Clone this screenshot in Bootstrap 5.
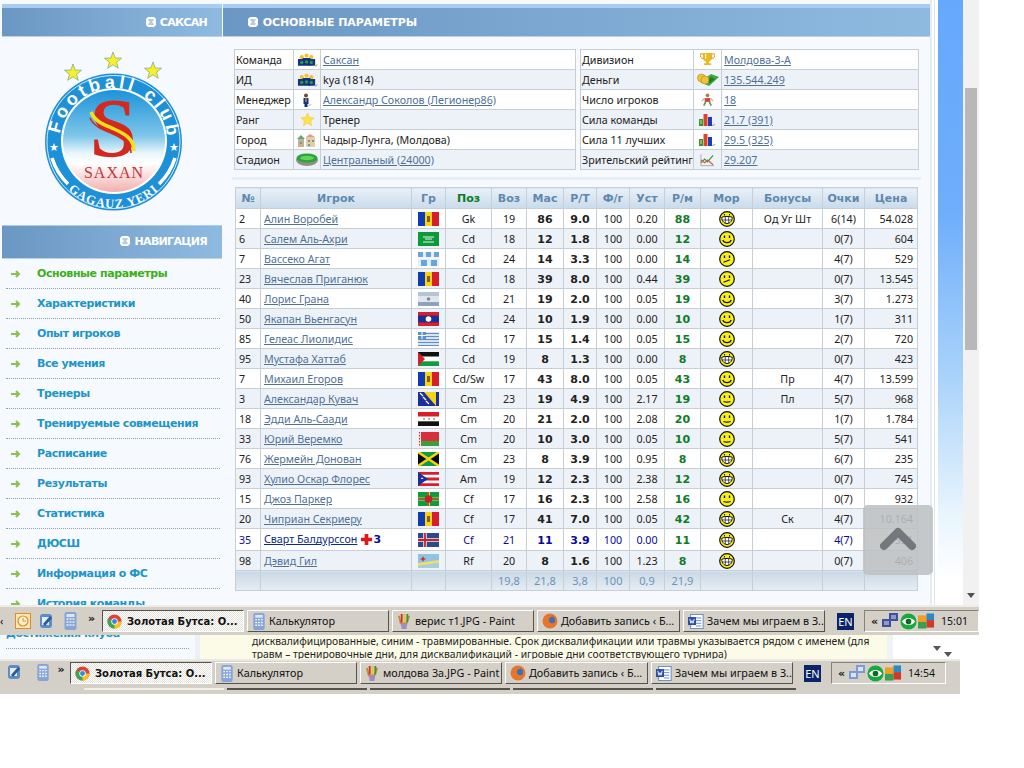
<!DOCTYPE html>
<html lang="ru">
<head>
<meta charset="utf-8">
<title>Золотая Бутса</title>
<link href="https://cdn.jsdelivr.net/npm/bootstrap@5.3.0/dist/css/bootstrap.min.css" rel="stylesheet">
<style>
html,body{margin:0;background:#fff;}
body{width:1024px;height:768px;overflow:hidden;font-family:"Noto Sans","DejaVu Sans",sans-serif;font-size:10.7px;color:#222;line-height:14px;}
a{color:#4f7197;}
.shot{width:979px;}
.win{height:605px;overflow:hidden;width:979px;}
.pagearea{width:930px;background:#f6f9fd;}
.side{width:220px;margin-left:2px;flex:none;}
.main{width:707px;margin-left:1px;flex:none;}
.hdr{height:33px;margin-top:4px;border-top:4px solid #a8cdf1;background:linear-gradient(90deg,#6a97c3,#8fbae0);color:#fff;font:bold 11px/29px "DejaVu Sans",sans-serif;letter-spacing:-.1px;border-bottom:1px solid #b9d2ea;}
.hdr2{margin-top:0;border-top:1px solid #a8cdf1;height:34px;line-height:31px;}
.hdr svg{vertical-align:-1px;margin-right:1px;}
.hright{text-align:right;padding-right:15px;letter-spacing:-.7px;}
.hleft{padding-left:25px;}
.logobox{height:188px;}
.navlist{list-style:none;margin:0;padding:0;}
.navlist li{height:30px;margin:0 0 0 4px;border-bottom:1px dotted #8ca0b3;padding-left:5px;display:flex;align-items:center;width:214px;font:bold 11px "DejaVu Sans",sans-serif;color:#1c95c9;letter-spacing:-.42px;}
.navlist li svg{margin-right:16px;flex:none;}
.navlist li.on{color:#3cb017;}
.tbl-p{border-collapse:collapse;table-layout:fixed;margin:0;}
.tbl-p td{border:1px solid #c6ced6;height:20px;padding:0 2px;line-height:14px;white-space:nowrap;background:#fff;color:#222;vertical-align:middle;}
.tbl-p td:first-child{padding-left:1px;}
.tbl-p tr:nth-child(even) td{background:#edf2f9;}
.tbl-p td.ic{text-align:center;padding:0;}
.tbl-p td svg{display:block;margin:auto;}
.plist{margin-top:12px;margin-left:11px;gap:4px;}
.sep{height:3px;background:#e7eef5;margin:7px 9px 7px 9px;}
.tbl-r{border-collapse:collapse;table-layout:fixed;margin:0 0 0 12px;width:682px;}
.tbl-r th,.tbl-r td{border:1px solid #c6ced6;height:20px;padding:0 3px;line-height:14px;white-space:nowrap;text-align:center;vertical-align:middle;background:#fff;color:#222;}
.tbl-r th{height:21px;background:linear-gradient(#e9f0f7,#c9dbeb);color:#5f88ae;font:bold 11px "DejaVu Sans",sans-serif;}
.tbl-r th.gp{color:#0b7a24;}
.tbl-r tbody tr:nth-child(even) td{background:#edf2f9;}
.tbl-r td.l{text-align:left;}
.tbl-r td.r{text-align:right;padding-right:4px;}
.tbl-r td.nm{padding-left:3px;}
.tbl-r td b{font:bold 11px "DejaVu Sans",sans-serif;}
.tbl-r td.g b{color:#0f7a2a;}
.tbl-r td svg{display:block;margin:auto;}
.tbl-r tr.inj td{color:#0a0a9c;height:22px;}
.tbl-r tr.inj a{color:#0a2a8c;}
.tbl-r tr.inj td.g b{color:#0f7a2a;}
.tbl-r tr.inj td svg.crossm{display:inline;margin:0 1px 2px 4px;vertical-align:middle;}
.injn{color:#0a0a9c;}
.tbl-r tfoot td{background:linear-gradient(#c9d8e5,#e6edf4);color:#6f93b6;font-size:11px;}
.tgap{width:8px;flex:none;background:linear-gradient(90deg,#e6ecf2 0,#e6ecf2 2px,#fff 2px,#fff 4px,#dde4ea 4px,#dde4ea 5px,#fff 5px);}
.bluecol{width:25px;background:linear-gradient(#66a8fb 0,#6eaefb 35%,#a9d2fa 62%,#e8f5fd 85%,#fff 96%);flex:none;}
.sbar{width:16px;flex:none;background:#f1f1f1;position:relative;}
.sthumb{position:absolute;left:2px;right:2px;top:88px;height:262px;background:#b8b8b8;}
.sarrow{position:absolute;left:4px;top:593px;width:0;height:0;border-left:4px solid transparent;border-right:4px solid transparent;border-top:5px solid #505050;}
.totop{position:absolute;left:863px;top:505px;width:70px;height:70px;border-radius:5px;background:rgba(190,192,195,.88);}
.totop svg{display:block;margin:20px auto 0;}
.tbar{background:#d4d0c8;border-top:2px solid #efece6;height:30px;display:flex;align-items:center;font-size:10.8px;color:#111;white-space:nowrap;}
.tbar1{width:979px;}
.tbar2{width:960px;height:29px;border-top:2px solid #ece9e2;align-items:flex-start;padding-top:1px;}
.tbtn{height:22px;flex:none;border:1px solid;border-color:#fff #55534e #55534e #fff;display:flex;align-items:center;padding-left:4px;gap:3px;overflow:hidden;}
.tbtn svg{flex:none;}
.tbtn.act{background:repeating-conic-gradient(#fff 0 25%,#e4e1da 0 50%) 0 0/2px 2px;border-color:#55534e #fff #fff #55534e;font:bold 10px "DejaVu Sans",sans-serif;gap:5px;}
.w141{width:142px;margin-right:3px;}
.w143{width:143px;margin-right:3px;}
.tico{flex:none;margin-right:8px;}
.chev{font:bold 11px "DejaVu Sans",sans-serif;margin:-6px 0 0 0;width:21px;flex:none;text-align:center;}
.lang{flex:none;width:17px;height:17px;background:#0a246a;color:#fff;text-align:center;font-size:11px;line-height:17px;margin:0 10px 0 11px;}
.tray{flex:none;width:115px;height:22px;border:1px solid;border-color:#85827a #fff #fff #85827a;display:flex;align-items:center;padding-left:6px;gap:1px;}
.tray b{font:bold 11px "DejaVu Sans",sans-serif;margin-right:2px;}
.tray span.tm{margin-left:5px;font-size:10.5px;}
.stub{height:24px;display:flex;width:960px;overflow:hidden;background:#fff;}
.stubside{width:195px;flex:none;background:#f6f9fd;overflow:hidden;}
.stubside div{font:bold 11px "DejaVu Sans",sans-serif;color:#1c95c9;margin:-8px 0 0 6px;height:22px;width:183px;border-bottom:1px dotted #8ca0b3;letter-spacing:-.42px;white-space:nowrap;}
.stubgap{width:5px;flex:none;background:#ecf1f6;}
.stubnote{width:687px;flex:none;background:#fbfbe7;padding:0 0 0 52px;overflow:hidden;font-size:10.3px;line-height:13px;color:#222;}
.stubnote p{margin:0;white-space:nowrap;}
.stubrt{flex:1;background:#fff;position:relative;border-left:6px solid #f0f3f6;}
.tri{position:absolute;width:0;height:0;border-left:4px solid transparent;border-right:4px solid transparent;border-top:5px solid #555;}
.residue{width:960px;height:6px;background:#d4d0c8;display:flex;gap:3px;padding-left:84px;}
.residue i{display:block;width:140px;height:2px;background:#55534e;margin-top:0;}
.residue i.w{background:#f2f0ec;}
</style>
</head>
<body>
<svg width="0" height="0" class="position-absolute">
<defs>
<symbol id="hi" viewBox="0 0 10 10"><path d="M2 0h6l2 2v6l-2 2H2L0 8V2z" fill="#fff"/><path d="M2.500 3h5M2.500 7h5M3.500 5h3" stroke="#6a97c3" stroke-width="1.200"/></symbol>
<symbol id="arr" viewBox="0 0 10 8"><path d="M0 4h8M5 1l3 3-3 3" fill="none" stroke="#8cc152" stroke-width="2"/></symbol>
<symbol id="team" viewBox="0 0 22 14"><circle cx="5" cy="4" r="2.200" fill="#f2c230"/><circle cx="10" cy="2.500" r="2.200" fill="#f2c230"/><circle cx="15" cy="4" r="2.200" fill="#f2c230"/><path d="M1 13V6h7v7zM6 13V5h8v8z" fill="#16317e"/><path d="M12 13V6h7v7z" fill="#16317e"/><circle cx="5" cy="9.500" r="1.700" fill="#23a046"/><circle cx="10" cy="9" r="1.700" fill="#23a046"/><circle cx="15" cy="9.500" r="1.700" fill="#23a046"/><path d="M18 13l4-2-2 3z" fill="#aaa"/></symbol>
<symbol id="mgr" viewBox="0 0 14 14"><circle cx="6" cy="2.500" r="2" fill="#6b4a2a"/><path d="M3.500 5h5v6h-1v3h-3v-3h-1z" fill="#16317e"/><path d="M5.500 5h1v4h-1z" fill="#e8c030"/><path d="M8 12l4-1-3 2z" fill="#aaa"/></symbol>
<symbol id="star" viewBox="0 0 16 16"><path d="M8 1l2.100 4.600 5 .6-3.700 3.400 1 5L8 12l-4.400 2.600 1-5L.9 6.200l5-.6z" fill="#fbe14a" stroke="#e8c85a" stroke-width=".6"/></symbol>
<symbol id="city" viewBox="0 0 20 14"><path d="M1 6h6v8H1z" fill="#c6b28a"/><path d="M0 6l4-4 4 4z" fill="#58a878"/><path d="M9 4h9v10H9z" fill="#e4cfa0"/><path d="M9 4l4-3 5 3z" fill="#e49a8a"/><path d="M3 9h2v2H3zM11 7h2v2h-2zM15 7h2v2h-2zM11 11h2v2h-2z" fill="#7a8fc0"/></symbol>
<symbol id="stad" viewBox="0 0 22 13"><ellipse cx="11" cy="7" rx="11" ry="6" fill="#8a9088"/><ellipse cx="11" cy="5" rx="10.500" ry="4.500" fill="#2fa23a"/><ellipse cx="11" cy="5" rx="7" ry="2.200" fill="#62d45a"/></symbol>
<symbol id="cup" viewBox="0 0 16 14"><path d="M3 0h10v4c0 3-2 5-3.500 5.500V11H12v2H4v-2h2.500V9.500C5 9 3 7 3 4z" fill="#ecb820"/><path d="M3 1H0c0 3 1 5 4 5M13 1h3c0 3-1 5-4 5" fill="none" stroke="#c99610"/><path d="M6 1v5" stroke="#fff3b0" stroke-width="1.500"/></symbol>
<symbol id="money" viewBox="0 0 22 14"><path d="M3 9l11-8 8 3-10 9z" fill="#3ea83e"/><path d="M9 8l5-4 4 2-5 4z" fill="#1d7d2a"/><circle cx="4.500" cy="5" r="4" fill="#eec33a" stroke="#b58a10" stroke-width=".6"/><circle cx="8" cy="7" r="4" fill="#eec33a" stroke="#b58a10" stroke-width=".6"/></symbol>
<symbol id="pl" viewBox="0 0 14 14"><circle cx="7" cy="2" r="2" fill="#b07b50"/><path d="M4 5h6v4H4z" fill="#d0403a"/><path d="M5 9L3 13M9 9l2 4" stroke="#5a9a50" stroke-width="1.800"/><path d="M4 5L1 8M10 5l3 3" stroke="#d0a080" stroke-width="1.200"/></symbol>
<symbol id="bars" viewBox="0 0 18 14"><path d="M0 6h4v7H0z" fill="#2d9a3a"/><path d="M4.500 1h4v12h-4z" fill="#d9452a"/><path d="M9 4h4v9H9z" fill="#1c3fb8"/><path d="M13 12l4-1-3 2z" fill="#888"/><path d="M1 8h2M1 10h2" stroke="#e8e040"/></symbol>
<symbol id="chart" viewBox="0 0 16 14"><path d="M1 1v12h14" fill="none" stroke="#aaa"/><path d="M1 10l4-4 3 3 6-7" fill="none" stroke="#3a9a3a" stroke-width="1.300"/><path d="M1 7l4 3 3-3 6 5" fill="none" stroke="#d05a4a" stroke-width="1.300"/></symbol>
<symbol id="s-grin" viewBox="0 0 16 16"><circle cx="8" cy="8" r="7.300" fill="#f7ee1e" stroke="#111" stroke-width="1.200"/><path d="M5.500 3v1.500M10.500 3v1.500" stroke="#111"/><path d="M2.800 6.200c2.500-1 8-1 10.400 0 .3 3.200-1.900 6.300-5.200 6.300S2.500 9.400 2.800 6.200z" fill="#fff" stroke="#111"/><path d="M3 9h10M6.300 6v6M9.700 6v6" stroke="#111" stroke-width=".7"/></symbol>
<symbol id="s-smile" viewBox="0 0 16 16"><circle cx="8" cy="8" r="7.300" fill="#f7ee1e" stroke="#111" stroke-width="1.200"/><path d="M5.500 4.500v2.500M10.500 4.500v2.500" stroke="#111" stroke-width="1.300"/><path d="M3.800 9c1 3.500 7.400 3.500 8.400 0" fill="none" stroke="#111" stroke-width="1.200"/></symbol>
<symbol id="s-wry" viewBox="0 0 16 16"><circle cx="8" cy="8" r="7.300" fill="#f7ee1e" stroke="#111" stroke-width="1.200"/><path d="M5.500 4.500v2.500M10.500 4.500v2.500" stroke="#111" stroke-width="1.300"/><path d="M4.500 11.200l6.500-2.400" fill="none" stroke="#111" stroke-width="1.200"/></symbol>
<symbol id="s-neu" viewBox="0 0 16 16"><circle cx="8" cy="8" r="7.300" fill="#f7ee1e" stroke="#111" stroke-width="1.200"/><path d="M5.500 4.500v2.500M10.500 4.500v2.500" stroke="#111" stroke-width="1.300"/><path d="M4.500 10.500c2 .8 5 .8 7 0" fill="none" stroke="#111" stroke-width="1.200"/></symbol>
<symbol id="f-md" viewBox="0 0 21 14"><path d="M0 0h7v14H0z" fill="#0f3cb0"/><path d="M7 0h7v14H7z" fill="#f5d418"/><path d="M14 0h7v14h-7z" fill="#d81e2a"/><path d="M9 4h3v6H9z" fill="#8a5a2a"/></symbol>
<symbol id="f-sa" viewBox="0 0 21 14"><path d="M0 0h21v14H0z" fill="#0c9a3a"/><path d="M5 5h11M7 7h7M5 10h11" stroke="#e8f5e8"/></symbol>
<symbol id="f-gt" viewBox="0 0 21 14"><path d="M0 0h21v14H0z" fill="#e2eef8"/><path d="M0 0h5v5H0zM8 0h5v5H8zM16 0h5v5h-5zM3 8h6v6H3zM13 8h6v6h-6z" fill="#6ba4da"/><path d="M0 6h21" stroke="#fff"/></symbol>
<symbol id="f-ar" viewBox="0 0 21 14"><path d="M0 0h21v14H0z" fill="#dfe6ee"/><path d="M0 0h21v4H0z" fill="#b6c4d6"/><path d="M0 10h21v4H0z" fill="#8ea2bd"/><circle cx="10.500" cy="7" r="1.800" fill="#888"/></symbol>
<symbol id="f-la" viewBox="0 0 21 14"><path d="M0 0h21v14H0z" fill="#d8202a"/><path d="M0 3.500h21v7H0z" fill="#1a2f9a"/><circle cx="10.500" cy="7" r="2.800" fill="#fff"/></symbol>
<symbol id="f-gr" viewBox="0 0 21 14"><path d="M0 0h21v14H0z" fill="#fff"/><path d="M0 1.500h21M0 4.500h21M0 7.500h21M0 10.500h21M0 13.500h21" stroke="#5f8fc4" stroke-width="1.500"/><path d="M0 0h8v7H0z" fill="#5f8fc4"/><path d="M4 0v7M0 3.500h8" stroke="#fff"/></symbol>
<symbol id="f-ps" viewBox="0 0 21 14"><path d="M0 0h21v4.700H0z" fill="#111"/><path d="M0 4.700h21v4.600H0z" fill="#fff"/><path d="M0 9.300h21V14H0z" fill="#129a3e"/><path d="M0 0l7 7-7 7z" fill="#d81e2a"/></symbol>
<symbol id="f-ba" viewBox="0 0 21 14"><path d="M0 0h21v14H0z" fill="#1a2f9a"/><path d="M6 0h12v14z" fill="#f5d418"/><path d="M2 1l3 3M5 5l3 3M8 9l3 3" stroke="#fff" stroke-width="1.300"/></symbol>
<symbol id="f-iq" viewBox="0 0 21 14"><path d="M0 0h21v4.700H0z" fill="#d81e2a"/><path d="M0 4.700h21v4.600H0z" fill="#fff"/><path d="M0 9.300h21V14H0z" fill="#111"/><path d="M5 7h2M10 7h2M15 7h2" stroke="#2a8a3a"/></symbol>
<symbol id="f-by" viewBox="0 0 21 14"><path d="M0 0h21v9H0z" fill="#d8303a"/><path d="M0 9h21v5H0z" fill="#3e9e3e"/><path d="M0 0h3v14H0z" fill="#f2e4e4"/><path d="M1.500 0v14" stroke="#d8303a" stroke-dasharray="1.500 1.500"/></symbol>
<symbol id="f-jm" viewBox="0 0 21 14"><path d="M0 0h21v14H0z" fill="#0a0a0a"/><path d="M0 0l10.500 7L21 0zM0 14l10.500-7L21 14z" fill="#129a3e"/><path d="M0 0l21 14M21 0L0 14" stroke="#f5d418" stroke-width="2.400"/></symbol>
<symbol id="f-pr" viewBox="0 0 21 14"><path d="M0 0h21v14H0z" fill="#fff"/><path d="M0 0h21v2.800H0zM0 5.600h21v2.800H0zM0 11.200h21V14H0z" fill="#d81e2a"/><path d="M0 0l10 7-10 7z" fill="#1a2f9a"/><path d="M3 7l1-2 1 2-2-1h3z" fill="#fff"/></symbol>
<symbol id="f-dm" viewBox="0 0 21 14"><path d="M0 0h21v14H0z" fill="#129a3e"/><path d="M9 0h3v14H9zM0 5.500h21v3H0z" fill="#ead050"/><path d="M10 0v14M0 7h21" stroke="#111"/><circle cx="10.500" cy="7" r="3.800" fill="#c8202a"/></symbol>
<symbol id="f-is" viewBox="0 0 21 14"><path d="M0 0h21v14H0z" fill="#2a4a8a"/><path d="M7 0v14M0 7h21" stroke="#eee" stroke-width="3.500"/><path d="M7 0v14M0 7h21" stroke="#c8202a" stroke-width="1.800"/></symbol>
<symbol id="f-aw" viewBox="0 0 21 14"><path d="M0 0h21v14H0z" fill="#8fc4e4"/><path d="M0 9l21-3v3L0 12z" fill="#e8e070"/><path d="M0 12l21-3v5H0z" fill="#a8cfd8"/><path d="M5 2l1 2 2 1-2 1-1 2-1-2-2-1 2-1z" fill="#d8303a"/></symbol>
<symbol id="chrome" viewBox="0 0 16 16"><circle cx="8" cy="8" r="7.500" fill="#db4437"/><path d="M8 8L1.500 4.300A7.500 7.500 0 0 0 8 15.500l3.600-6.300z" fill="#3aa757"/><path d="M8 8h7.300A7.500 7.500 0 0 1 8 15.500z" fill="#f5c518"/><circle cx="8" cy="8" r="3.400" fill="#fff"/><circle cx="8" cy="8" r="2.600" fill="#3f7fe8"/></symbol>
<symbol id="calc" viewBox="0 0 14 18"><rect x="1" y="0" width="12" height="18" rx="2" fill="#86a4d6"/><path d="M3 2h8v3H3z" fill="#dbe7f7"/><path d="M3 7h8M3 10h8M3 13h8" stroke="#eaf1fb" stroke-width="1.500" stroke-dasharray="2 1"/></symbol>
<symbol id="paint" viewBox="0 0 16 18"><path d="M2 3l2 8 6 0 3-8" fill="none" stroke="#c7882e" stroke-width="2"/><path d="M5 1v9" stroke="#d0302a" stroke-width="2"/><path d="M8 1v9" stroke="#eec030" stroke-width="2"/><path d="M11 1v9" stroke="#3a9a3a" stroke-width="2"/><path d="M4 11h7l-1 6H5z" fill="#a28cc0"/></symbol>
<symbol id="ff" viewBox="0 0 16 16"><circle cx="8" cy="8" r="7.500" fill="#e8762a"/><circle cx="9" cy="7" r="4" fill="#3a6fc0"/><path d="M2 5c3-4 8-4 11-1-3-1-5 0-6 2-1 3 2 5 5 4-2 3-7 4-10 0z" fill="#e8762a"/></symbol>
<symbol id="word" viewBox="0 0 18 16"><rect x="3" y="0" width="14" height="16" fill="#fff" stroke="#5c7fc0"/><path d="M9 4h6M9 7h6M9 10h6M9 13h6" stroke="#5c7fc0"/><rect x="0" y="3" width="9" height="9" fill="#2a4fa8"/><path d="M2 5l1.300 5 1.200-3 1.200 3L7 5" fill="none" stroke="#fff"/></symbol>
<symbol id="clock" viewBox="0 0 16 16"><rect x=".5" y=".5" width="15" height="15" fill="#fbe7b4" stroke="#e08a2a"/><circle cx="8" cy="8" r="5" fill="#fff3d0" stroke="#e08a2a" stroke-width="1.200"/><path d="M8 5v3h3" fill="none" stroke="#e08a2a"/></symbol>
<symbol id="edit" viewBox="0 0 16 16"><rect x="1" y="1" width="12" height="14" rx="3" fill="#5a8ec8"/><path d="M3 4h7v8H3z" fill="#e4eef9"/><path d="M4 11l7-8 2 2-7 8z" fill="#2a5a98"/></symbol>
<symbol id="net" viewBox="0 0 18 16"><rect x="8" y="0" width="9" height="8" fill="#7c9ad8"/><rect x="1" y="6" width="9" height="8" fill="#7c9ad8"/><path d="M3 8h5v4H3zM10 2h5v4h-5z" fill="#d8e6fa"/></symbol>
<symbol id="netd" viewBox="0 0 18 16"><rect x="8" y="0" width="9" height="8" fill="#3f4f9a"/><rect x="1" y="6" width="9" height="8" fill="#3f4f9a"/><path d="M3 8h5v4H3zM10 2h5v4h-5z" fill="#8a9ad0"/></symbol>
<symbol id="eye" viewBox="0 0 18 18"><circle cx="9" cy="9" r="8.500" fill="#19a83c"/><path d="M2 9c3-5 11-5 14 0-3 5-11 5-14 0z" fill="#fff"/><circle cx="9" cy="9" r="3" fill="#0b6a24"/></symbol>
<symbol id="avg" viewBox="0 0 18 16"><path d="M0 2h9v7H0z" fill="#f0a020"/><path d="M9 0h8v7H9z" fill="#2a8ac8"/><path d="M0 9h9v7H0z" fill="#3aa050"/><path d="M9 7h8v8H9z" fill="#d03a2a"/></symbol>
<symbol id="cross" viewBox="0 0 12 12"><path d="M4 0h4v4h4v4H8v4H4V8H0V4h4z" fill="#e01818"/></symbol>
<polygon id="logostar" points="0,-9 2.200,-3 8.600,-2.800 3.600,1.200 5.300,7.300 0,3.800 -5.300,7.300 -3.600,1.200 -8.600,-2.800 -2.200,-3" fill="#f8ee2a" stroke="#5a9a8a" stroke-width=".6"/>
</defs>
</svg>

<div class="shot">
  <div class="win d-flex position-relative">
    <div class="pagearea d-flex flex-none">
      <div class="side">
        <div class="hdr hright"><svg width="10" height="10"><use href="#hi"/></svg> САКСАН</div>
        <div class="logobox">
          <svg width="220" height="188" viewBox="0 37 220 188" role="img" aria-label="Saxan">
            <defs>
              <linearGradient id="lg" x1="0" y1="0" x2="0" y2="1"><stop offset="0" stop-color="#1c93d9"/><stop offset=".45" stop-color="#7fc6e9"/><stop offset=".62" stop-color="#eaf6fb"/><stop offset=".72" stop-color="#fff"/><stop offset=".78" stop-color="#fdeeee"/><stop offset="1" stop-color="#f0b0ae"/></linearGradient>
              <path id="topArc" d="M58.100 150A54 54 0 1 1 164.900 150"/>
              <path id="botArc" d="M61 184.400A66 66 0 0 0 162 184.400"/>
            </defs>
            <use href="#logostar" x="71" y="73"/>
            <use href="#logostar" x="111" y="61"/>
            <use href="#logostar" x="151" y="71"/>
            <circle cx="111.500" cy="142" r="68.500" fill="#1e90d8"/>
            <circle cx="111.500" cy="142" r="66.500" fill="none" stroke="#fff" stroke-width=".8"/>
            <circle cx="112" cy="141" r="53" fill="#fff"/>
            <circle cx="112" cy="141" r="51" fill="url(#lg)"/>
            <text font-family="Liberation Sans,sans-serif" font-weight="700" font-size="18" fill="#fff" letter-spacing="3.600"><textPath href="#topArc" startOffset="16">Football&#160;club</textPath></text>
            <path d="M50 158A62 62 0 0 0 66 184M173 158A62 62 0 0 1 157 184" fill="none" stroke="#fff" stroke-width="3.500"/>
            <text font-family="Liberation Serif,serif" font-weight="700" font-size="12.500" fill="#fff" letter-spacing="1" text-anchor="middle"><textPath href="#botArc" startOffset="50%">GAGAUZ YERI</textPath></text>
            <text x="52" y="151" font-size="11" fill="#fff" text-anchor="middle" font-family="DejaVu Sans,sans-serif">★</text>
            <text x="172" y="151" font-size="11" fill="#fff" text-anchor="middle" font-family="DejaVu Sans,sans-serif">★</text>
            <text x="111" y="157" font-family="Liberation Serif,serif" font-weight="700" font-size="84" fill="#d32a20" text-anchor="middle">S</text>
            <path d="M89 112c4 10 14 13 23 17s20 9 20 22" fill="none" stroke="#f5e01a" stroke-width="3.500"/>
            <path d="M88 118c4 9 14 12 23 16s18 9 18 19" fill="none" stroke="#d32a20" stroke-width="1.600"/>
            <text x="112" y="178" font-family="Liberation Serif,serif" font-size="16" fill="#c8343a" text-anchor="middle" letter-spacing="1">SAXAN</text>
          </svg>
        </div>
        <div class="hdr hdr2 hright"><svg width="10" height="10"><use href="#hi"/></svg> НАВИГАЦИЯ</div>
        <ul class="navlist">
          <li class="on"><svg width="10" height="8"><use href="#arr"/></svg>Основные параметры</li>
          <li><svg width="10" height="8"><use href="#arr"/></svg>Характеристики</li>
          <li><svg width="10" height="8"><use href="#arr"/></svg>Опыт игроков</li>
          <li><svg width="10" height="8"><use href="#arr"/></svg>Все умения</li>
          <li><svg width="10" height="8"><use href="#arr"/></svg>Тренеры</li>
          <li><svg width="10" height="8"><use href="#arr"/></svg>Тренируемые совмещения</li>
          <li><svg width="10" height="8"><use href="#arr"/></svg>Расписание</li>
          <li><svg width="10" height="8"><use href="#arr"/></svg>Результаты</li>
          <li><svg width="10" height="8"><use href="#arr"/></svg>Статистика</li>
          <li><svg width="10" height="8"><use href="#arr"/></svg>ДЮСШ</li>
          <li><svg width="10" height="8"><use href="#arr"/></svg>Информация о ФС</li>
          <li><svg width="10" height="8"><use href="#arr"/></svg>История команды</li>
        </ul>
      </div>
      <div class="main">
        <div class="hdr hleft"><svg width="10" height="10"><use href="#hi"/></svg> ОСНОВНЫЕ ПАРАМЕТРЫ</div>
        <div class="plist d-flex">
          <table class="tbl-p" style="width:342px">
            <colgroup><col style="width:59px"><col style="width:27px"><col></colgroup>
            <tr><td>Команда</td><td class="ic"><svg width="21" height="14"><use href="#team"/></svg></td><td><a href="#">Саксан</a></td></tr>
            <tr><td>ИД</td><td class="ic"><svg width="21" height="14"><use href="#team"/></svg></td><td>kya (1814)</td></tr>
            <tr><td>Менеджер</td><td class="ic"><svg width="14" height="14"><use href="#mgr"/></svg></td><td><a href="#">Александр Соколов (Легионер86)</a></td></tr>
            <tr><td>Ранг</td><td class="ic"><svg width="15" height="15"><use href="#star"/></svg></td><td>Тренер</td></tr>
            <tr><td>Город</td><td class="ic"><svg width="20" height="14"><use href="#city"/></svg></td><td>Чадыр-Лунга, (Молдова)</td></tr>
            <tr><td>Стадион</td><td class="ic"><svg width="22" height="13"><use href="#stad"/></svg></td><td><a href="#">Центральный (24000)</a></td></tr>
          </table>
          <table class="tbl-p" style="width:339px">
            <colgroup><col style="width:113px"><col style="width:28px"><col></colgroup>
            <tr><td>Дивизион</td><td class="ic"><svg width="15" height="13"><use href="#cup"/></svg></td><td><a href="#">Молдова-3-А</a></td></tr>
            <tr><td>Деньги</td><td class="ic"><svg width="22" height="14"><use href="#money"/></svg></td><td><a href="#">135.544.249</a></td></tr>
            <tr><td>Число игроков</td><td class="ic"><svg width="13" height="14"><use href="#pl"/></svg></td><td><a href="#">18</a></td></tr>
            <tr><td>Сила команды</td><td class="ic"><svg width="18" height="14"><use href="#bars"/></svg></td><td><a href="#">21.7 (391)</a></td></tr>
            <tr><td>Сила 11 лучших</td><td class="ic"><svg width="18" height="14"><use href="#bars"/></svg></td><td><a href="#">29.5 (325)</a></td></tr>
            <tr><td>Зрительский рейтинг</td><td class="ic"><svg width="15" height="14"><use href="#chart"/></svg></td><td><a href="#">29.207</a></td></tr>
          </table>
        </div>
        <div class="sep"></div>
        <table class="tbl-r">
          <colgroup><col style="width:25px"><col style="width:151px"><col style="width:34px"><col style="width:46px"><col style="width:35px"><col style="width:37px"><col style="width:33px"><col style="width:33px"><col style="width:35px"><col style="width:36px"><col style="width:52px"><col style="width:70px"><col style="width:42px"><col style="width:53px"></colgroup>
          <thead><tr><th>№</th><th>Игрок</th><th>Гр</th><th class="gp">Поз</th><th>Воз</th><th>Мас</th><th>Р/Т</th><th>Ф/г</th><th>Уст</th><th>Р/м</th><th>Мор</th><th>Бонусы</th><th>Очки</th><th>Цена</th></tr></thead>
          <tbody>
<tr><td class="l">2</td><td class="l nm"><a href="#">Алин Воробей</a></td><td><svg width="21" height="14"><use href="#f-md"/></svg></td><td>Gk</td><td>19</td><td><b>86</b></td><td><b>9.0</b></td><td>100</td><td>0.20</td><td class="g"><b>88</b></td><td><svg width="16" height="16"><use href="#s-grin"/></svg></td><td>Од Уг Шт</td><td>6(14)</td><td class="r">54.028</td></tr>
<tr><td class="l">6</td><td class="l nm"><a href="#">Салем Аль-Ахри</a></td><td><svg width="21" height="14"><use href="#f-sa"/></svg></td><td>Cd</td><td>18</td><td><b>12</b></td><td><b>1.8</b></td><td>100</td><td>0.00</td><td class="g"><b>12</b></td><td><svg width="16" height="16"><use href="#s-smile"/></svg></td><td></td><td>0(7)</td><td class="r">604</td></tr>
<tr><td class="l">7</td><td class="l nm"><a href="#">Вассеко Агат</a></td><td><svg width="21" height="14"><use href="#f-gt"/></svg></td><td>Cd</td><td>24</td><td><b>14</b></td><td><b>3.3</b></td><td>100</td><td>0.00</td><td class="g"><b>14</b></td><td><svg width="16" height="16"><use href="#s-wry"/></svg></td><td></td><td>4(7)</td><td class="r">529</td></tr>
<tr><td class="l">23</td><td class="l nm"><a href="#">Вячеслав Приганюк</a></td><td><svg width="21" height="14"><use href="#f-md"/></svg></td><td>Cd</td><td>18</td><td><b>39</b></td><td><b>8.0</b></td><td>100</td><td>0.44</td><td class="g"><b>39</b></td><td><svg width="16" height="16"><use href="#s-wry"/></svg></td><td></td><td>0(7)</td><td class="r">13.545</td></tr>
<tr><td class="l">40</td><td class="l nm"><a href="#">Лорис Грана</a></td><td><svg width="21" height="14"><use href="#f-ar"/></svg></td><td>Cd</td><td>21</td><td><b>19</b></td><td><b>2.0</b></td><td>100</td><td>0.05</td><td class="g"><b>19</b></td><td><svg width="16" height="16"><use href="#s-smile"/></svg></td><td></td><td>3(7)</td><td class="r">1.273</td></tr>
<tr><td class="l">50</td><td class="l nm"><a href="#">Якапан Вьенгасун</a></td><td><svg width="21" height="14"><use href="#f-la"/></svg></td><td>Cd</td><td>24</td><td><b>10</b></td><td><b>1.9</b></td><td>100</td><td>0.00</td><td class="g"><b>10</b></td><td><svg width="16" height="16"><use href="#s-smile"/></svg></td><td></td><td>1(7)</td><td class="r">311</td></tr>
<tr><td class="l">85</td><td class="l nm"><a href="#">Гелеас Лиолидис</a></td><td><svg width="21" height="14"><use href="#f-gr"/></svg></td><td>Cd</td><td>17</td><td><b>15</b></td><td><b>1.4</b></td><td>100</td><td>0.05</td><td class="g"><b>15</b></td><td><svg width="16" height="16"><use href="#s-smile"/></svg></td><td></td><td>2(7)</td><td class="r">720</td></tr>
<tr><td class="l">95</td><td class="l nm"><a href="#">Мустафа Хаттаб</a></td><td><svg width="21" height="14"><use href="#f-ps"/></svg></td><td>Cd</td><td>19</td><td><b>8</b></td><td><b>1.3</b></td><td>100</td><td>0.00</td><td class="g"><b>8</b></td><td><svg width="16" height="16"><use href="#s-grin"/></svg></td><td></td><td>0(7)</td><td class="r">423</td></tr>
<tr><td class="l">7</td><td class="l nm"><a href="#">Михаил Егоров</a></td><td><svg width="21" height="14"><use href="#f-md"/></svg></td><td>Cd/Sw</td><td>17</td><td><b>43</b></td><td><b>8.0</b></td><td>100</td><td>0.05</td><td class="g"><b>43</b></td><td><svg width="16" height="16"><use href="#s-smile"/></svg></td><td>Пр</td><td>4(7)</td><td class="r">13.599</td></tr>
<tr><td class="l">3</td><td class="l nm"><a href="#">Александар Кувач</a></td><td><svg width="21" height="14"><use href="#f-ba"/></svg></td><td>Cm</td><td>23</td><td><b>19</b></td><td><b>4.9</b></td><td>100</td><td>2.17</td><td class="g"><b>19</b></td><td><svg width="16" height="16"><use href="#s-neu"/></svg></td><td>Пл</td><td>5(7)</td><td class="r">968</td></tr>
<tr><td class="l">18</td><td class="l nm"><a href="#">Эдди Аль-Саади</a></td><td><svg width="21" height="14"><use href="#f-iq"/></svg></td><td>Cm</td><td>20</td><td><b>21</b></td><td><b>2.0</b></td><td>100</td><td>2.08</td><td class="g"><b>20</b></td><td><svg width="16" height="16"><use href="#s-neu"/></svg></td><td></td><td>1(7)</td><td class="r">1.784</td></tr>
<tr><td class="l">33</td><td class="l nm"><a href="#">Юрий Веремко</a></td><td><svg width="21" height="14"><use href="#f-by"/></svg></td><td>Cm</td><td>20</td><td><b>10</b></td><td><b>3.0</b></td><td>100</td><td>0.05</td><td class="g"><b>10</b></td><td><svg width="16" height="16"><use href="#s-neu"/></svg></td><td></td><td>5(7)</td><td class="r">541</td></tr>
<tr><td class="l">76</td><td class="l nm"><a href="#">Жермейн Донован</a></td><td><svg width="21" height="14"><use href="#f-jm"/></svg></td><td>Cm</td><td>23</td><td><b>8</b></td><td><b>3.9</b></td><td>100</td><td>0.95</td><td class="g"><b>8</b></td><td><svg width="16" height="16"><use href="#s-grin"/></svg></td><td></td><td>6(7)</td><td class="r">235</td></tr>
<tr><td class="l">93</td><td class="l nm"><a href="#">Хулио Оскар Флорес</a></td><td><svg width="21" height="14"><use href="#f-pr"/></svg></td><td>Am</td><td>19</td><td><b>12</b></td><td><b>2.3</b></td><td>100</td><td>2.38</td><td class="g"><b>12</b></td><td><svg width="16" height="16"><use href="#s-grin"/></svg></td><td></td><td>0(7)</td><td class="r">745</td></tr>
<tr><td class="l">15</td><td class="l nm"><a href="#">Джоз Паркер</a></td><td><svg width="21" height="14"><use href="#f-dm"/></svg></td><td>Cf</td><td>17</td><td><b>16</b></td><td><b>2.3</b></td><td>100</td><td>2.58</td><td class="g"><b>16</b></td><td><svg width="16" height="16"><use href="#s-neu"/></svg></td><td></td><td>0(7)</td><td class="r">932</td></tr>
<tr><td class="l">20</td><td class="l nm"><a href="#">Чиприан Секриеру</a></td><td><svg width="21" height="14"><use href="#f-md"/></svg></td><td>Cf</td><td>17</td><td><b>41</b></td><td><b>7.0</b></td><td>100</td><td>0.05</td><td class="g"><b>42</b></td><td><svg width="16" height="16"><use href="#s-grin"/></svg></td><td>Ск</td><td>4(7)</td><td class="r">10.164</td></tr>
<tr class="inj"><td class="l">35</td><td class="l nm"><a href="#">Сварт Балдурссон</a><svg class="crossm" width="11" height="11"><use href="#cross"/></svg><b class="injn">3</b></td><td><svg width="21" height="14"><use href="#f-is"/></svg></td><td>Cf</td><td>21</td><td><b>11</b></td><td><b>3.9</b></td><td>100</td><td>0.00</td><td class="g"><b>11</b></td><td><svg width="16" height="16"><use href="#s-grin"/></svg></td><td></td><td>4(7)</td><td class="r">531</td></tr>
<tr><td class="l">98</td><td class="l nm"><a href="#">Дэвид Гил</a></td><td><svg width="21" height="14"><use href="#f-aw"/></svg></td><td>Rf</td><td>20</td><td><b>8</b></td><td><b>1.6</b></td><td>100</td><td>1.23</td><td class="g"><b>8</b></td><td><svg width="16" height="16"><use href="#s-grin"/></svg></td><td></td><td>0(7)</td><td class="r">406</td></tr>
          </tbody>
          <tfoot><tr><td></td><td></td><td></td><td></td><td>19,8</td><td>21,8</td><td>3,8</td><td>100</td><td>0,9</td><td>21,9</td><td></td><td></td><td></td><td></td></tr></tfoot>
        </table>
      </div>
    </div>
    <div class="tgap"></div>
    <div class="bluecol"></div>
    <div class="sbar"><div class="sthumb"></div><div class="sarrow"></div></div>
    <div class="totop"><svg width="36" height="26" viewBox="0 0 36 26"><path d="M4 21L18 7l14 14" fill="none" stroke="#74777b" stroke-width="8" stroke-linecap="round" stroke-linejoin="round"/></svg></div>
  </div>

  <div class="tbar tbar1">
    <span class="tico" style="width:4px;margin-right:11px">‹</span>
    <svg class="tico" width="16" height="16"><use href="#clock"/></svg>
    <svg class="tico" width="16" height="16"><use href="#edit"/></svg>
    <svg class="tico" width="15" height="18" style="margin-right:3px"><use href="#calc"/></svg>
    <span class="chev">»</span>
    <div class="tbtn act w141"><svg width="15" height="15"><use href="#chrome"/></svg>Золотая Бутса: О...</div>
    <div class="tbtn w141"><svg width="14" height="17"><use href="#calc"/></svg><span>Калькулятор</span></div>
    <div class="tbtn w141"><svg width="15" height="17"><use href="#paint"/></svg><span>верис т1.JPG - Paint</span></div>
    <div class="tbtn w143"><svg width="16" height="16"><use href="#ff"/></svg><span>Добавить запись ‹ Б...</span></div>
    <div class="tbtn w141" style="margin-right:0"><svg width="16" height="15"><use href="#word"/></svg><span>Зачем мы играем в З...</span></div>
    <div class="lang" style="margin-left:12px">EN</div>
    <div class="tray"><b>«</b><svg width="18" height="16"><use href="#netd"/></svg><svg width="17" height="17"><use href="#eye"/></svg><svg width="17" height="16"><use href="#avg"/></svg><span class="tm">15:01</span></div>
  </div>

  <div class="stub">
    <div class="stubside"><div>Достижения клуба</div></div>
    <div class="stubgap"></div>
    <div class="stubnote"><p>дисквалифицированные, синим - травмированные. Срок дисквалификации или травмы указывается рядом с именем (для</p><p>травм – тренировочные дни, для дисквалификаций - игровые дни соответствующего турнира)</p></div>
    <div class="stubrt"><span class="tri" style="left:40px;top:11px"></span><span class="tri" style="left:51px;top:17px"></span></div>
  </div>

  <div class="tbar tbar2">
    <svg class="tico" width="16" height="16" style="margin:2px 13px 0 7px"><use href="#edit"/></svg>
    <svg class="tico" width="14" height="17" style="margin:2px 2px 0 0"><use href="#calc"/></svg>
    <span class="chev" style="margin-top:1px;width:18px">»</span>
    <div class="tbtn act w141"><svg width="15" height="15"><use href="#chrome"/></svg>Золотая Бутса: О...</div>
    <div class="tbtn w141"><svg width="14" height="17"><use href="#calc"/></svg><span>Калькулятор</span></div>
    <div class="tbtn w141"><svg width="15" height="17"><use href="#paint"/></svg><span>молдова 3а.JPG - Paint</span></div>
    <div class="tbtn w143"><svg width="16" height="16"><use href="#ff"/></svg><span>Добавить запись ‹ Б...</span></div>
    <div class="tbtn w141" style="margin-right:0"><svg width="16" height="15"><use href="#word"/></svg><span>Зачем мы играем в З...</span></div>
    <div class="lang" style="margin-top:3px">EN</div>
    <div class="tray"><b>«</b><svg width="18" height="16"><use href="#net"/></svg><svg width="17" height="17"><use href="#eye"/></svg><svg width="17" height="16"><use href="#avg"/></svg><span class="tm">14:54</span></div>
  </div>
  <div class="residue"><i class="w"></i><i></i><i></i><i></i><i></i></div>
</div>
<script src="https://cdn.jsdelivr.net/npm/bootstrap@5.3.0/dist/js/bootstrap.bundle.min.js"></script>
</body>
</html>
